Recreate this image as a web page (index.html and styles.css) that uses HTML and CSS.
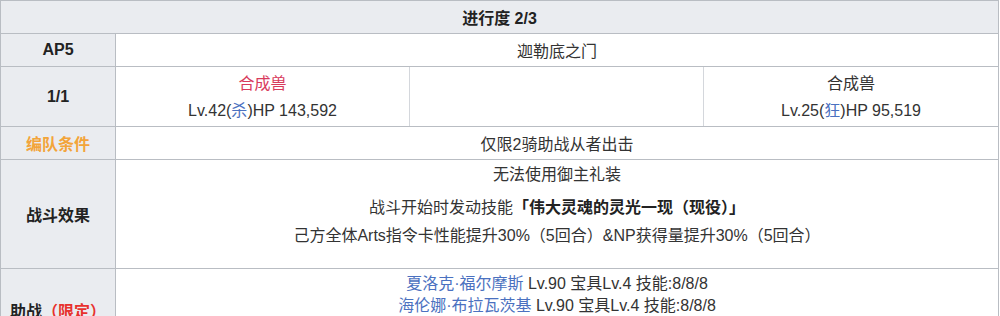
FILE: index.html
```html
<!DOCTYPE html>
<html lang="zh">
<head>
<meta charset="utf-8">
<title>进行度 2/3</title>
<link rel="stylesheet" href="styles.css">
</head>
<body>
<div class="quest">
  <div class="cell head span">进行度 2/3</div>

  <div class="cell label row-ap">AP5</div>
  <div class="cell content">迦勒底之门</div>

  <div class="cell label">1/1</div>
  <div class="cell enemies">
    <div class="enemy">
      <div class="enemy-name red">合成兽</div>
      <div>Lv.42(<span class="link">杀</span>)HP 143,592</div>
    </div>
    <div class="enemy"></div>
    <div class="enemy">
      <div class="enemy-name">合成兽</div>
      <div>Lv.25(<span class="link">狂</span>)HP 95,519</div>
    </div>
  </div>

  <div class="cell label orange">编队条件</div>
  <div class="cell content">仅限2骑助战从者出击</div>

  <div class="cell label">战斗效果</div>
  <div class="cell effects">
    <div class="line">无法使用御主礼装</div>
    <p class="skill">战斗开始时发动技能<b>「伟大灵魂的灵光一现（现役）」</b><br>己方全体Arts指令卡性能提升30%（5回合）&amp;NP获得量提升30%（5回合）</p>
  </div>

  <div class="cell label">助战<span class="limited">（限定）</span></div>
  <div class="cell support">
    <div class="line"><span class="link">夏洛克·福尔摩斯</span> Lv.90 宝具Lv.4 技能:8/8/8</div>
    <div class="line"><span class="link">海伦娜·布拉瓦茨基</span> Lv.90 宝具Lv.4 技能:8/8/8</div>
  </div>
</div>
</body>
</html>
```

FILE: styles.css
```css
html, body {
  margin: 0;
  padding: 0;
  background: #ffffff;
}

body {
  font-family: "Liberation Sans", "Noto Sans CJK SC", sans-serif;
  font-size: 16px;
  color: #333333;
}

.quest {
  width: 999px;
  display: grid;
  grid-template-columns: 114px 1fr;
  grid-template-rows: 32px 32px 59px 32px 108px 82px;
  gap: 1px;
  background: #b9bdc3;
  border: 1px solid #b9bdc3;
  box-sizing: border-box;
}

.cell {
  background: #ffffff;
  text-align: center;
}

.span {
  grid-column: 1 / span 2;
}

.head {
  background: #eaecf0;
  font-weight: bold;
  display: flex;
  align-items: center;
  justify-content: center;
  color: #222222;
}

.label {
  background: #eaecf0;
  font-weight: bold;
  color: #222222;
  display: flex;
  align-items: center;
  justify-content: center;
}

.content {
  display: flex;
  align-items: center;
  justify-content: center;
}

.orange {
  color: #f3a43a;
}

.red {
  color: #d83a5c;
}

.limited {
  color: #e8322e;
}

.link {
  color: #4b71c0;
}

.enemies {
  display: grid;
  grid-template-columns: 293px 293px 1fr;
  gap: 1px;
  background: #d4d7dc;
}

.enemy {
  background: #ffffff;
  display: flex;
  flex-direction: column;
  justify-content: center;
  line-height: 27px;
}

.effects {
  padding-top: 4px;
}

.line {
  line-height: 22px;
}

.skill {
  margin: 8px 0 0;
  line-height: 28px;
}

.skill b {
  color: #222222;
}

.support {
  padding-top: 4px;
}
```
